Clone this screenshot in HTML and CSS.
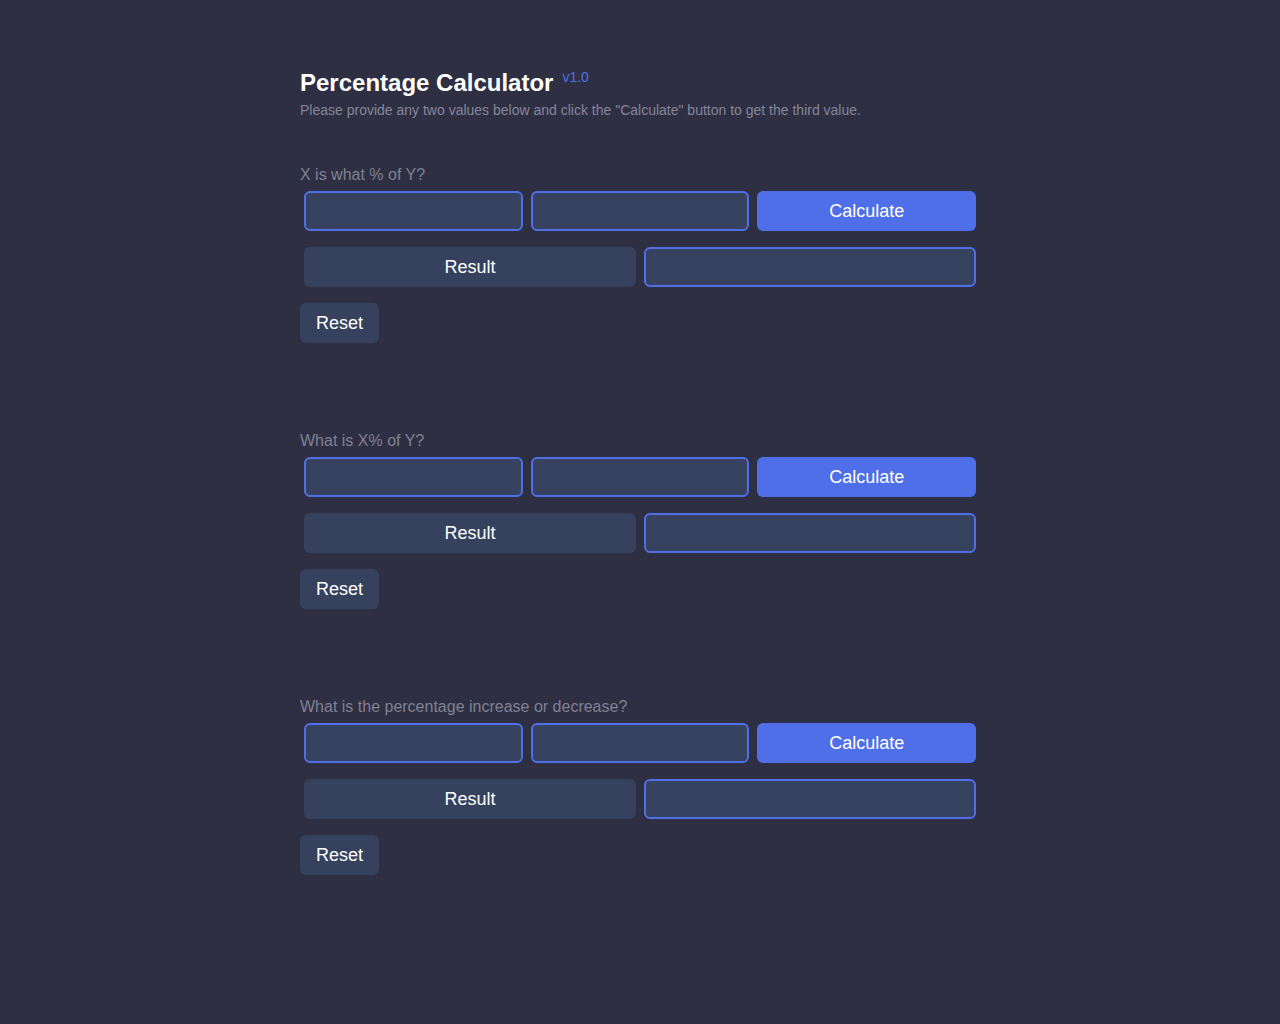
FILE: index.html
```html
<!DOCTYPE html>
<html lang="en">
<head>
<meta charset="utf-8">
<title>Percentage Calculator</title>
<link rel="stylesheet" href="styles.css">
</head>
<body>
<main class="calc">
  <h1 class="title"><span>Percentage Calculator</span><span class="version">v1.0</span></h1>
  <p class="subtitle">Please provide any two values below and click the "Calculate" button to get the third value.</p>

  <section class="block">
    <div class="label">X is what % of Y?</div>
    <div class="row row-3">
      <input class="field" type="text">
      <input class="field" type="text">
      <button class="btn btn-primary">Calculate</button>
    </div>
    <div class="row row-2">
      <div class="result-label">Result</div>
      <input class="field" type="text">
    </div>
    <button class="btn btn-reset">Reset</button>
  </section>

  <section class="block">
    <div class="label">What is X% of Y?</div>
    <div class="row row-3">
      <input class="field" type="text">
      <input class="field" type="text">
      <button class="btn btn-primary">Calculate</button>
    </div>
    <div class="row row-2">
      <div class="result-label">Result</div>
      <input class="field" type="text">
    </div>
    <button class="btn btn-reset">Reset</button>
  </section>

  <section class="block">
    <div class="label">What is the percentage increase or decrease?</div>
    <div class="row row-3">
      <input class="field" type="text">
      <input class="field" type="text">
      <button class="btn btn-primary">Calculate</button>
    </div>
    <div class="row row-2">
      <div class="result-label">Result</div>
      <input class="field" type="text">
    </div>
    <button class="btn btn-reset">Reset</button>
  </section>
</main>
</body>
</html>
```

FILE: styles.css
```css
* { box-sizing: border-box; }

html, body {
  margin: 0;
  padding: 0;
  background: #2e2f42;
  font-family: "Liberation Sans", Arial, sans-serif;
  color: #ffffff;
}

.calc {
  width: 680px;
  margin: 0 auto;
  padding-top: 69px;
  display: flex;
  flex-direction: column;
}

.title {
  margin: 0;
  font-size: 24px;
  line-height: 28px;
  font-weight: 700;
  color: #ffffff;
  display: flex;
  align-items: flex-start;
}

.version {
  margin-left: 9px;
  font-size: 14px;
  line-height: 16px;
  font-weight: 400;
  color: #4f6fe8;
}

.subtitle {
  margin: 5px 0 0;
  font-size: 14px;
  line-height: 16px;
  color: #85869a;
}

.block {
  margin-top: 89px;
  display: flex;
  flex-direction: column;
  align-items: flex-start;
}

.subtitle + .block { margin-top: 48px; }

.label {
  font-size: 16px;
  line-height: 18px;
  color: #808192;
}

.row {
  width: 100%;
  display: grid;
  margin-top: 3px;
}

.row-3 { grid-template-columns: repeat(3, 1fr); }
.row-2 { grid-template-columns: repeat(2, 1fr); margin-top: 8px; }

.row > * {
  margin: 4px;
  height: 40px;
  min-width: 0;
}

.field {
  background: #374160;
  border: 2px solid #4f6fe8;
  border-radius: 6px;
  padding: 0 10px;
  font-family: inherit;
  font-size: 18px;
  color: #ffffff;
  outline: none;
}

.btn {
  font-family: inherit;
  font-size: 18px;
  color: #ffffff;
  border: none;
  border-radius: 6px;
  cursor: pointer;
  height: 40px;
}

.btn-primary {
  background: #4f6fe8;
}

.result-label {
  background: #36415e;
  border-radius: 6px;
  display: flex;
  align-items: center;
  justify-content: center;
  font-size: 18px;
  color: #ffffff;
}

.btn-reset {
  margin-top: 12px;
  background: #36415e;
  padding: 0 16px;
}
```
